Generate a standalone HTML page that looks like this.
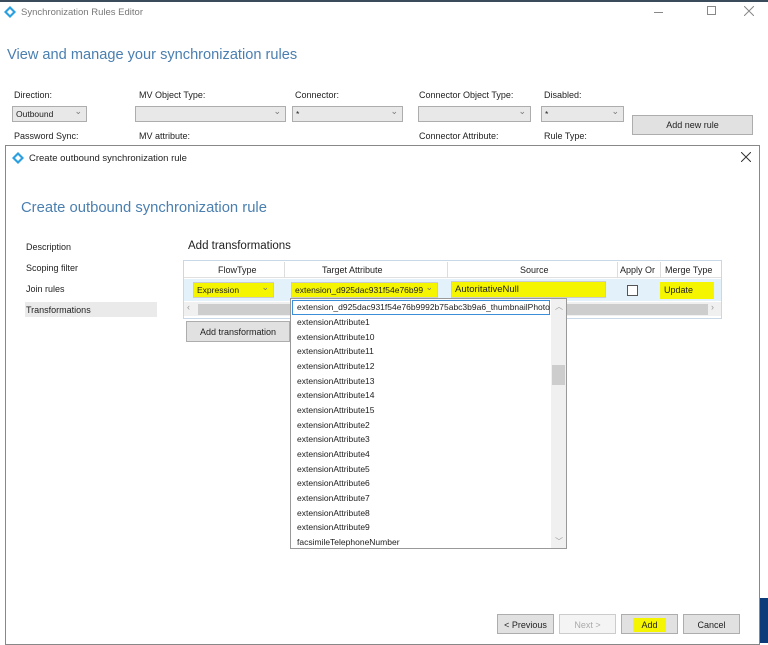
<!DOCTYPE html>
<html><head><meta charset="utf-8"><style>
*{margin:0;padding:0;box-sizing:border-box}
body{width:768px;height:643px;position:relative;background:#fff;font-family:"Liberation Sans",sans-serif;font-size:9px;color:#222;overflow:hidden}
.a{position:absolute}
.dd{position:absolute;border:1px solid #adadad;background:#e8e8e8;height:16px;font-size:8.5px;padding:2px 3px}
.dd:after{content:"⌄";position:absolute;right:4px;top:-1px;color:#777;font-size:9px}
.btn{position:absolute;border:1px solid #adadad;background:#e1e1e1;text-align:center;font-size:9px}
.hl{background:#f5f500}
.li{position:absolute;left:6px;font-size:8.5px;color:#222}
</style></head><body>
<div class="a" style="left:0;top:0;width:768px;height:2px;background:#3a4b5c"></div>
<svg class="a" style="left:4px;top:6px" width="12" height="12" viewBox="0 0 12 12"><path d="M6 0L12 6L6 12L0 6Z" fill="#2aa0e0"/><path d="M6 3L9 6L6 9L3 6Z" fill="#fff"/></svg>
<div class="a" style="left:21px;top:7px;color:#777;font-size:9.5px">Synchronization Rules Editor</div>
<div class="a" style="left:654px;top:12px;width:9px;height:1px;background:#888"></div>
<div class="a" style="left:707px;top:6px;width:9px;height:9px;border:1px solid #888"></div>
<svg class="a" style="left:744px;top:6px" width="10" height="10" viewBox="0 0 10 10"><path d="M0 0L10 10M10 0L0 10" stroke="#888" stroke-width="1"/></svg>
<div class="a" style="left:7px;top:47px;color:#4a7fb0;font-size:14.6px">View and manage your synchronization rules</div>
<div class="a" style="left:14px;top:90px">Direction:</div>
<div class="a" style="left:139px;top:90px">MV Object Type:</div>
<div class="a" style="left:295px;top:90px">Connector:</div>
<div class="a" style="left:419px;top:90px">Connector Object Type:</div>
<div class="a" style="left:544px;top:90px">Disabled:</div>
<div class="dd" style="left:12px;top:106px;width:75px">Outbound</div>
<div class="dd" style="left:135px;top:106px;width:151px"></div>
<div class="dd" style="left:292px;top:106px;width:111px">*</div>
<div class="dd" style="left:418px;top:106px;width:113px"></div>
<div class="dd" style="left:541px;top:106px;width:83px">*</div>
<div class="btn" style="left:632px;top:115px;width:121px;height:20px;padding-top:4px">Add new rule</div>
<div class="a" style="left:14px;top:131px">Password Sync:</div>
<div class="a" style="left:139px;top:131px">MV attribute:</div>
<div class="a" style="left:419px;top:131px">Connector Attribute:</div>
<div class="a" style="left:544px;top:131px">Rule Type:</div>
<div class="a" style="left:760px;top:598px;width:8px;height:45px;background:#0d3a78"></div>
<div class="a" style="left:5px;top:145px;width:755px;height:500px;background:#fff;border:1px solid #888"></div>
<svg class="a" style="left:12px;top:152px" width="12" height="12" viewBox="0 0 12 12"><path d="M6 0L12 6L6 12L0 6Z" fill="#2aa0e0"/><path d="M6 3L9 6L6 9L3 6Z" fill="#fff"/></svg>
<div class="a" style="left:29px;top:153px;font-size:9.5px">Create outbound synchronization rule</div>
<svg class="a" style="left:741px;top:152px" width="10" height="10" viewBox="0 0 10 10"><path d="M0 0L10 10M10 0L0 10" stroke="#333" stroke-width="1"/></svg>
<div class="a" style="left:21px;top:200px;color:#4a7fb0;font-size:14.8px">Create outbound synchronization rule</div>
<div class="a" style="left:26px;top:242px">Description</div>
<div class="a" style="left:26px;top:263px">Scoping filter</div>
<div class="a" style="left:26px;top:284px">Join rules</div>
<div class="a" style="left:25px;top:302px;width:132px;height:15px;background:#eaeaea;padding:3px 1px">Transformations</div>
<div class="a" style="left:188px;top:240px;font-size:11.5px">Add transformations</div>
<div class="a" style="left:183px;top:260px;width:539px;height:59px;border:1px solid #c8d8e8;background:#fff"></div>
<div class="a" style="left:184px;top:261px;width:537px;height:17px;border-bottom:1px solid #e0e0e0"></div>
<div class="a" style="left:218px;top:265px">FlowType</div>
<div class="a" style="left:322px;top:265px">Target Attribute</div>
<div class="a" style="left:520px;top:265px">Source</div>
<div class="a" style="left:620px;top:265px">Apply Or</div>
<div class="a" style="left:665px;top:265px">Merge Type</div>
<div class="a" style="left:284px;top:262px;width:1px;height:16px;background:#ddd"></div>
<div class="a" style="left:447px;top:262px;width:1px;height:16px;background:#ddd"></div>
<div class="a" style="left:617px;top:262px;width:1px;height:16px;background:#ddd"></div>
<div class="a" style="left:660px;top:262px;width:1px;height:16px;background:#ddd"></div>
<div class="a" style="left:184px;top:279px;width:537px;height:22px;background:#e3f1fb"></div>
<div class="dd hl" style="left:193px;top:282px;width:81px;border-color:#ccc">Expression</div>
<div class="dd hl" style="left:291px;top:282px;width:147px;border-color:#ccc;overflow:hidden;white-space:nowrap">extension_d925dac931f54e76b99</div>
<div class="a hl" style="left:451px;top:281px;width:155px;height:17px;border:1px solid #ccc;padding:2px 3px;font-size:9.5px">AutoritativeNull</div>
<div class="a" style="left:627px;top:285px;width:11px;height:11px;border:1px solid #555;background:#fff"></div>
<div class="a hl" style="left:660px;top:282px;width:54px;height:17px;padding:3px 4px">Update</div>
<div class="a" style="left:184px;top:302px;width:537px;height:14px;background:#f0f0f0"></div>
<div class="a" style="left:198px;top:304px;width:510px;height:11px;background:#cdcdcd"></div>
<div class="a" style="left:187px;top:302px;color:#999">‹</div>
<div class="a" style="left:711px;top:302px;color:#999">›</div>
<div class="btn" style="left:186px;top:321px;width:104px;height:21px;padding-top:5px">Add transformation</div>
<div class="a" style="left:290px;top:298px;width:277px;height:251px;border:1px solid #999;background:#fff">
<div class="a" style="left:1px;top:1px;width:258px;height:15px;border:1px solid #3a8fd8"></div>
<div class="a" style="left:260px;top:0;width:15px;height:249px;background:#f0f0f0"></div>
<div class="a" style="left:261px;top:66px;width:13px;height:20px;background:#cdcdcd"></div>
<div class="a" style="left:264px;top:2px;color:#999;font-size:8px">︿</div>
<div class="a" style="left:264px;top:237px;color:#999;font-size:8px">﹀</div>
<div class="li" style="top:3px">extension_d925dac931f54e76b9992b75abc3b9a6_thumbnailPhoto</div>
<div class="li" style="top:18px">extensionAttribute1</div>
<div class="li" style="top:33px">extensionAttribute10</div>
<div class="li" style="top:47px">extensionAttribute11</div>
<div class="li" style="top:62px">extensionAttribute12</div>
<div class="li" style="top:77px">extensionAttribute13</div>
<div class="li" style="top:91px">extensionAttribute14</div>
<div class="li" style="top:106px">extensionAttribute15</div>
<div class="li" style="top:121px">extensionAttribute2</div>
<div class="li" style="top:135px">extensionAttribute3</div>
<div class="li" style="top:150px">extensionAttribute4</div>
<div class="li" style="top:165px">extensionAttribute5</div>
<div class="li" style="top:179px">extensionAttribute6</div>
<div class="li" style="top:194px">extensionAttribute7</div>
<div class="li" style="top:209px">extensionAttribute8</div>
<div class="li" style="top:223px">extensionAttribute9</div>
<div class="li" style="top:238px">facsimileTelephoneNumber</div>
</div>
<div class="btn" style="left:497px;top:614px;width:57px;height:20px;padding-top:5px">&lt; Previous</div>
<div class="btn" style="left:559px;top:614px;width:57px;height:20px;padding-top:5px;background:#f4f4f4;border-color:#ccc;color:#aaa">Next &gt;</div>
<div class="btn" style="left:621px;top:614px;width:57px;height:20px;padding-top:5px"><span class="hl" style="padding:2px 8px">Add</span></div>
<div class="btn" style="left:683px;top:614px;width:57px;height:20px;padding-top:5px">Cancel</div>
</body></html>
